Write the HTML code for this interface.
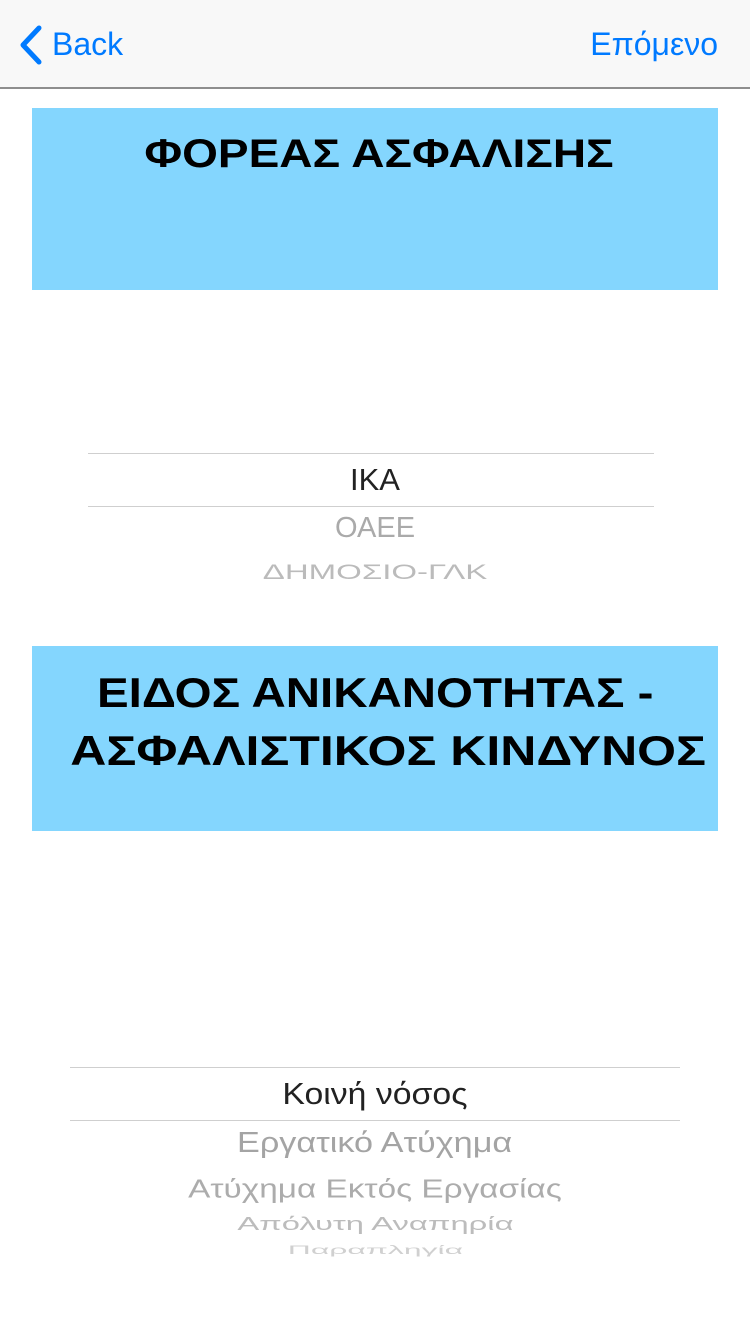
<!DOCTYPE html>
<html><head><meta charset="utf-8"><style>
*{margin:0;padding:0;box-sizing:border-box}
body{width:750px;height:1334px;background:#fff;font-family:"Liberation Sans","DejaVu Sans",sans-serif;position:relative;overflow:hidden}
.nav{position:absolute;left:0;top:0;width:750px;height:89px;background:#f8f8f8;border-bottom:2px solid #8e8e8e}
.blue{color:#007aff;font-size:32px;position:absolute;top:26px}
.box{position:absolute;left:32px;width:686px;background:#84d6fe;text-align:center;font-weight:bold;color:#000}
.t{position:absolute;left:0;width:750px;text-align:center;white-space:nowrap}
.t span,.box span{display:inline-block;white-space:nowrap}
.line{position:absolute;height:1px;background:#cfcfcf}
</style></head><body>
<div class="nav">
<svg style="position:absolute;left:16px;top:24px" width="28" height="42" viewBox="0 0 28 42"><path d="M23 4 L7 21 L23 38" stroke="#007aff" stroke-width="5" fill="none" stroke-linecap="round" stroke-linejoin="round"/></svg>
<div class="blue" style="left:52px">Back</div>
<div class="blue" style="right:32px">Επόμενο</div>
</div>
<div class="box" style="top:108px;height:182px;font-size:40px;padding-top:24px"><span style="transform:translateX(4px) scaleX(1.15)">ΦΟΡΕΑΣ ΑΣΦΑΛΙΣΗΣ</span></div>
<div class="line" style="left:88px;width:566px;top:453px"></div>
<div class="line" style="left:88px;width:566px;top:506px"></div>
<div class="t" style="top:462px;font-size:31px;color:#222">ΙΚΑ</div>
<div class="t" style="top:512px;font-size:29px;color:#aaa">ΟΑΕΕ</div>
<div class="t" style="top:558px;font-size:25px;color:#bbb"><span style="transform:scale(1.32,0.85)">ΔΗΜΟΣΙΟ-ΓΛΚ</span></div>
<div class="box" style="top:646px;height:185px;font-size:42px;line-height:58px;padding-top:18px"><span style="transform:scaleX(1.13)">ΕΙΔΟΣ ΑΝΙΚΑΝΟΤΗΤΑΣ -</span><br><span style="transform:translateX(13px) scaleX(1.19)">ΑΣΦΑΛΙΣΤΙΚΟΣ ΚΙΝΔΥΝΟΣ</span></div>
<div class="line" style="left:70px;width:610px;top:1067px"></div>
<div class="line" style="left:70px;width:610px;top:1120px"></div>
<div class="t" style="top:1076px;font-size:31px;color:#222"><span style="transform:scaleX(1.09)">Κοινή νόσος</span></div>
<div class="t" style="top:1127px;font-size:29px;color:#a4a4a4"><span style="transform:scaleX(1.18)">Εργατικό Ατύχημα</span></div>
<div class="t" style="top:1173px;font-size:28px;color:#acacac"><span style="transform:scale(1.19,0.93)">Ατύχημα Εκτός Εργασίας</span></div>
<div class="t" style="top:1210px;font-size:25px;color:#bcbcbc"><span style="transform:scale(1.31,0.75)">Απόλυτη Αναπηρία</span></div>
<div class="t" style="top:1237px;font-size:22px;color:#d0d0d0"><span style="transform:scale(1.45,0.55)">Παραπληγία</span></div>
</body></html>
